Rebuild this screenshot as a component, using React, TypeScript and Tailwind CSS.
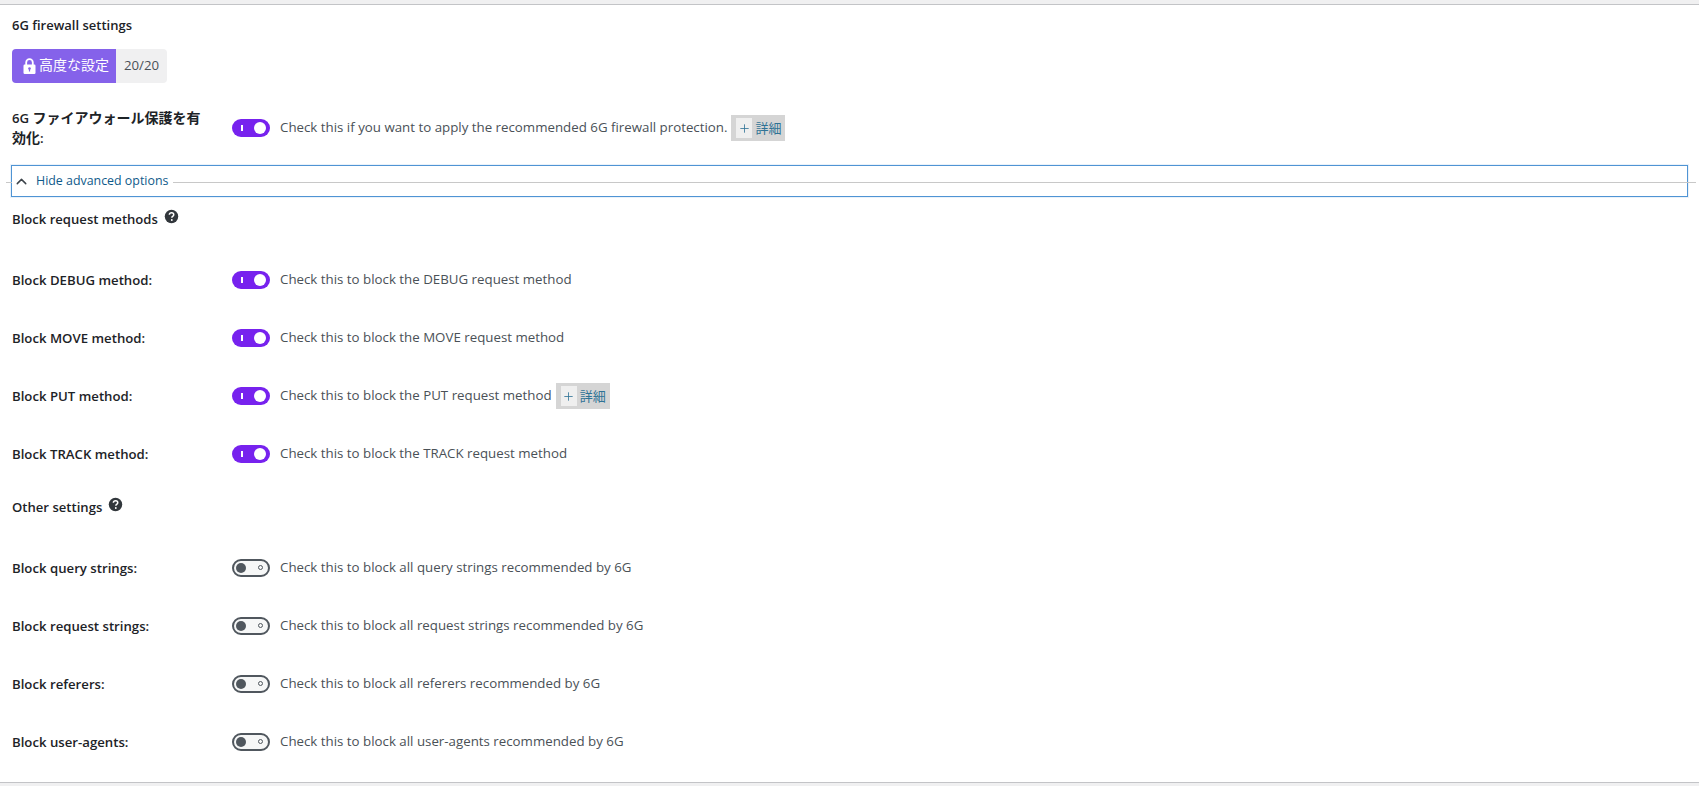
import type { ReactNode } from 'react';
import { ChevronUp, Plus } from 'lucide-react';

const fontStack = "font-['Open_Sans','Noto_Sans_CJK_JP',sans-serif]";

function Toggle({ on }: { on: boolean }) {
    if (on) {
        return (
            <span className="relative block h-[18px] w-[38px] shrink-0 rounded-full bg-[#7722ee]">
                <span className="absolute left-[9px] top-[6px] h-[6px] w-[1.5px] bg-white"></span>
                <span className="absolute right-[4px] top-[3px] h-[12px] w-[12px] rounded-full bg-white"></span>
            </span>
        );
    }
    return (
        <span className="relative block h-[18px] w-[38px] shrink-0 rounded-full border-2 border-[#50575e] bg-[#f6f7f7]">
            <span className="absolute left-[2px] top-[2px] h-[10px] w-[10px] rounded-full bg-[#50575e]"></span>
            <span className="absolute right-[5px] top-[4.5px] h-[5px] w-[5px] rounded-full border border-[#50575e]"></span>
        </span>
    );
}

function MoreInfo() {
    return (
        <span className="ml-[4px] flex h-[26px] w-[54px] items-center gap-[3px] bg-[#d5d5d5] pl-[5px] text-[#2f7396]">
            <span className="flex h-[20px] w-[16px] items-center justify-center bg-[#efefef]">
                <Plus size={13} strokeWidth={1.5} />
            </span>
            <span className="text-[13px] leading-none">詳細</span>
        </span>
    );
}

function Row({ label, text, on, more }: { label: ReactNode; text: string; on: boolean; more?: boolean }) {
    return (
        <div className="flex h-[58px] items-center">
            <div className="w-[220px] shrink-0 pl-[12px] pr-[10px] text-[13.2px] font-semibold leading-[19px] text-[#1d2327]">{label}</div>
            <div className="mt-[-1px] mr-[10px] shrink-0 pl-[12px]"><Toggle on={on} /></div>
            <span className="text-[13.3px] text-[#4a5157]">{text}</span>
            {more && <MoreInfo />}
        </div>
    );
}

function HelpIcon() {
    return (
        <svg viewBox="0 0 16 16" className="h-[15px] w-[15px] shrink-0">
            <circle cx="8" cy="8" r="7.2" fill="#32373c" />
            <path d="M5.7 6.2c.1-1.4 1.1-2.2 2.4-2.2 1.300 0 2.300.8 2.300 2 0 1-.6 1.500-1.200 1.900-.6.4-.8.7-.8 1.300" fill="none" stroke="#fff" strokeWidth="1.600" />
            <circle cx="8.300" cy="11.700" r="1" fill="#fff" />
        </svg>
    );
}

function LockIcon() {
    return (
        <svg viewBox="0 0 13 16" className="h-[16px] w-[13px] shrink-0">
            <path d="M3.2 7V4.500a3.300 3.300 0 0 1 6.600 0V7" fill="none" stroke="#fff" strokeWidth="1.800" />
            <rect x="0.500" y="6.500" width="12" height="9.500" rx="1.200" fill="#fff" />
            <circle cx="6.500" cy="10.500" r="1.300" fill="#8562ea" />
            <rect x="5.900" y="10.500" width="1.200" height="3" fill="#8562ea" />
        </svg>
    );
}

function SectionTitle({ title }: { title: string }) {
    return (
        <div className="flex items-center gap-[6px] pl-[12px] text-[13.1px] font-semibold text-[#1d2327]">
            <span>{title}</span>
            <span className="mt-[-7px]"><HelpIcon /></span>
        </div>
    );
}

const methodRows = [
    { label: 'Block DEBUG method:', text: 'Check this to block the DEBUG request method' },
    { label: 'Block MOVE method:', text: 'Check this to block the MOVE request method' },
    { label: 'Block PUT method:', text: 'Check this to block the PUT request method', more: true },
    { label: 'Block TRACK method:', text: 'Check this to block the TRACK request method' },
];

const otherRows = [
    { label: 'Block query strings:', text: 'Check this to block all query strings recommended by 6G' },
    { label: 'Block request strings:', text: 'Check this to block all request strings recommended by 6G' },
    { label: 'Block referers:', text: 'Check this to block all referers recommended by 6G' },
    { label: 'Block user-agents:', text: 'Check this to block all user-agents recommended by 6G' },
];

export default function App() {
    return (
        <div className={`flex h-[786px] flex-col overflow-hidden bg-[#f0f0f1] ${fontStack}`}>
            <div className="mt-[4px] h-[779px] border-y border-[#c3c4c7] bg-white">
                <h2 className="pl-[12px] pt-[11px] text-[13px] font-semibold leading-[18px] text-[#1d2327]">6G firewall settings</h2>
                <div className="ml-[12px] mt-[15px] flex h-[34px] w-[155px]">
                    <div className="flex w-[104px] items-center gap-[3px] rounded-l-[4px] bg-[#8562ea] pl-[11px] text-[14px] leading-none text-white">
                        <LockIcon />
                        <span className="mt-[-2px]">高度な設定</span>
                    </div>
                    <div className="flex w-[51px] items-center justify-center rounded-r-[4px] bg-[#f0f0f1] text-[13.25px] text-[#4a5157]">20/20</div>
                </div>

                <div className="mt-[16px]">
                    <Row label={<>6G <span className="text-[14px]">ファイアウォール保護を有効化</span>:</>} text="Check this if you want to apply the recommended 6G firewall protection." on more />
                </div>

                <div className="relative mx-[11px] mt-[8px] flex h-[32px] items-center border-[1.5px] border-[#4f94d4] shadow-[0_0_0_1px_#eaf2fa]">
                    <span className="absolute left-[-6px] right-[-9px] top-[15.5px] h-px bg-[#c8c8c8]"></span>
                    <span className="relative flex items-center bg-white pr-[5px] text-[12.4px] text-[#0f5a8a]">
                        <ChevronUp size={17} strokeWidth={2} className="ml-[1px] mr-[6px] mt-[2px] text-[#3c434a]" />
                        <span className="mt-[1px]">Hide advanced options</span>
                    </span>
                </div>

                <div className="mt-[13px] h-[41px]"><SectionTitle title="Block request methods" /></div>
                {methodRows.map((row, index) => (
                    <Row key={index} label={row.label} text={row.text} more={row.more} on />
                ))}
                <div className="mt-[15px] h-[41px]"><SectionTitle title="Other settings" /></div>
                {otherRows.map((row, index) => (
                    <Row key={index} label={row.label} text={row.text} on={false} />
                ))}
            </div>
        </div>
    );
}
